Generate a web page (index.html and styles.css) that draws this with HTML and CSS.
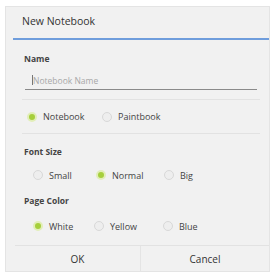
FILE: index.html
```html
<!DOCTYPE html>
<html>
<head>
<meta charset="utf-8">
<link rel="stylesheet" href="styles.css">
</head>
<body>
<div class="dialog">
  <div class="title">New Notebook</div>
  <div class="title-line"></div>
  <div class="section-label name-label">Name</div>
  <div class="input"><span class="cursor"></span><span class="placeholder">Notebook Name</span></div>
  <div class="divider d1"></div>
  <div class="radio-row type-row">
    <div class="radio on"><span class="dot"></span>Notebook</div>
    <div class="radio"><span class="dot"></span>Paintbook</div>
  </div>
  <div class="divider d2"></div>
  <div class="section-label fs-label">Font Size</div>
  <div class="radio-row three fs-row">
    <div class="radio"><span class="dot"></span>Small</div>
    <div class="radio on"><span class="dot"></span>Normal</div>
    <div class="radio"><span class="dot"></span>Big</div>
  </div>
  <div class="section-label pc-label">Page Color</div>
  <div class="radio-row three pc-row">
    <div class="radio on"><span class="dot"></span>White</div>
    <div class="radio"><span class="dot"></span>Yellow</div>
    <div class="radio"><span class="dot"></span>Blue</div>
  </div>
  <div class="buttons">
    <div class="btn">OK</div>
    <div class="btn">Cancel</div>
  </div>
</div>
</body>
</html>
```
FILE: styles.css
```css
* { box-sizing: border-box; }
body {
  margin: 0;
  background: #ffffff;
  font-family: "Open Sans", "Noto Sans", sans-serif;
  color: #3a3a3a;
}
.dialog {
  margin: 6px 0 0 5px;
  width: 265px;
  height: 266px;
  background: #f1f1f1;
  border: 1px solid #e4e4e4;
  display: flex;
  flex-direction: column;
}
.title {
  height: 31px;
  padding: 0 0 4px 16px;
  display: flex;
  align-items: center;
  font-size: 10.5px;
  color: #333;
}
.title-line {
  height: 2px;
  background: #6f9ddc;
  margin: 0 0 0 7px;
}
.section-label {
  height: 12px;
  line-height: 12px;
  font-size: 8.5px;
  font-weight: bold;
  color: #444;
  padding-left: 18px;
}
.name-label { margin-top: 13px; }
.input {
  margin: 6px 12px 0 19px;
  height: 19px;
  border-bottom: 1px solid #8a8a8a;
  display: flex;
  align-items: center;
  padding-left: 7px;
}
.cursor {
  width: 1px;
  height: 10px;
  background: #777;
}
.placeholder {
  font-size: 8.5px;
  color: #a8a8a8;
}
.divider {
  height: 1px;
  background: #e2e2e2;
}
.d1 { margin: 9px 9px 0 16px; }
.d2 { margin: 0 9px 0 16px; }
.radio-row {
  display: flex;
  align-items: center;
  font-size: 9px;
  color: #444;
}
.type-row { padding-left: 21px; height: 33px; }
.type-row .radio:first-child { width: 75px; }
.three { padding-left: 27px; height: 30px; }
.fs-row { margin-top: 2px; }
.pc-row { margin-top: 4px; }
.fs-row .radio:nth-child(1) { width: 63px; }
.fs-row .radio:nth-child(2) { width: 68px; }
.pc-row .radio:nth-child(1) { width: 61px; }
.pc-row .radio:nth-child(2) { width: 69px; }
.radio {
  display: flex;
  align-items: center;
}
.dot {
  width: 10px;
  height: 10px;
  border-radius: 50%;
  border: 1px solid #d8d8d8;
  background: #eeeeee;
  margin-right: 6px;
}
.radio.on .dot {
  background: #a6cf3c;
  border: 2.5px solid #e2eeb8;
}
.fs-label { margin-top: 12px; }
.pc-label { margin-top: 5px; }
.buttons {
  margin-top: auto;
  height: 26px;
  border-top: 1px solid #e2e2e2;
  margin-left: 9px;
  display: flex;
  font-size: 10px;
  color: #333;
}
.btn {
  flex: 1;
  display: flex;
  align-items: center;
  justify-content: center;
}
.btn:first-child {
  flex: 0 0 126px;
  border-right: 1px solid #e4e4e4;
}
```
